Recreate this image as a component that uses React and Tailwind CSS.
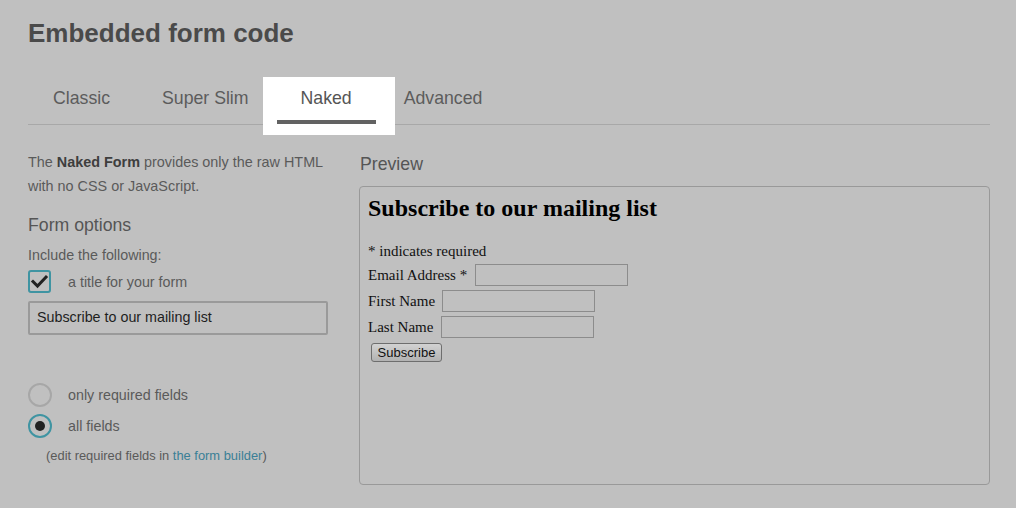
export default function App() {
  const tabs = ["Classic", "Super Slim", "Naked", "Advanced"];
  return (
    <div className="w-[1016px] h-[508px] bg-[#c0c0c0] pl-[28px] pr-[26px] overflow-hidden font-['Liberation_Sans',Arial,sans-serif]">
      <h1 className="pt-[18px] text-[26px] leading-[30px] font-bold text-[#4a4a4a]">Embedded form code</h1>

      <div className="relative mt-[39px] flex border-b border-[#a8a8a8]">
        <div className="absolute z-0 left-[235px] top-[-10px] w-[132px] h-[58px] bg-white" />
        {tabs.map((t, i) => {
          const active = t === "Naked";
          return (
            <div key={t} className={`relative z-10 flex flex-col ${i === 0 ? "-ml-[1px]" : ""}`}>
              <div className={`px-[26px] text-[17.7px] leading-[22px] ${active ? "text-[#555555]" : "text-[#5c5c5c]"}`}>{t}</div>
              <div className={`mt-[11px] h-[4px] ${active ? "mx-[2px] bg-[#626262]" : "bg-transparent"}`} />
            </div>
          );
        })}
      </div>

      <div className="flex gap-[31px]">
        {/* Left column */}
        <div className="w-[300px] shrink-0 text-[#5a5a5a]">
          <p className="mt-[25px] text-[14.4px] leading-[24px]">
            The <span className="font-bold text-[#3e3e3e]">Naked Form</span> provides only the raw HTML with no CSS or JavaScript.
          </p>
          <div className="mt-[15px] text-[17.7px] leading-[24px] text-[#555555]">Form options</div>
          <div className="mt-[8px] text-[14.3px] leading-[20px]">Include the following:</div>
          <div className="mt-[5px] flex items-center">
            <div className="w-[23px] h-[23px] rounded-[3px] border-2 border-[#3f94a2] flex items-center justify-center">
              <svg width="19" height="19" viewBox="0 0 19 19">
                <polyline points="3,9.5 7.5,14 16,5" fill="none" stroke="#222" strokeWidth="3" strokeLinecap="square" />
              </svg>
            </div>
            <span className="ml-[17px] text-[14.3px] leading-[20px]">a title for your form</span>
          </div>
          <div className="mt-[8px] h-[34px] w-[300px] border-2 border-[#9a9a9a] rounded-[2px] flex items-center pl-[7px] text-[14.3px] text-[#1e1e1e]">
            Subscribe to our mailing list
          </div>

          <div className="mt-[48px] flex items-center">
            <div className="w-[24px] h-[24px] rounded-full border-2 border-[#a7a7a7]" />
            <span className="ml-[16px] text-[14.3px] leading-[20px]">only required fields</span>
          </div>
          <div className="mt-[7px] flex items-center">
            <div className="w-[24px] h-[24px] rounded-full border-[2.5px] border-[#3f94a2] flex items-center justify-center">
              <div className="w-[10px] h-[10px] rounded-full bg-[#222222]" />
            </div>
            <span className="ml-[16px] text-[14.3px] leading-[20px]">all fields</span>
          </div>
          <div className="mt-[9px] ml-[18px] text-[12.9px] leading-[18px] text-[#5a5a5a]">
            (edit required fields in <span className="text-[#3a7f96]">the form builder</span>)
          </div>
        </div>

        {/* Right column */}
        <div className="w-[631px] shrink-0">
          <div className="mt-[27px] pl-[1px] text-[17.7px] leading-[24px] text-[#555555]">Preview</div>
          <div className="mt-[10px] h-[299px] border border-[#999999] rounded-[4px] pl-[8px] pt-[7px] font-['Liberation_Serif','Times_New_Roman',serif] text-[#111111]">
            <h2 className="text-[24px] leading-[28px] font-bold text-black">Subscribe to our mailing list</h2>
            <div className="mt-[19px] text-[15px] leading-[20px]">* indicates required</div>
            <div className="mt-[3px] flex items-center h-[22px] text-[15px]">
              <span>Email Address *</span>
              <div className="ml-[8px] w-[153px] h-[22px] border border-[#8c8c8c]" />
            </div>
            <div className="mt-[4px] flex items-center h-[22px] text-[15px]">
              <span>First Name</span>
              <div className="ml-[7px] w-[153px] h-[22px] border border-[#8c8c8c]" />
            </div>
            <div className="mt-[4px] flex items-center h-[22px] text-[15px]">
              <span>Last Name</span>
              <div className="ml-[8px] w-[153px] h-[22px] border border-[#8c8c8c]" />
            </div>
            <div className="mt-[5px] ml-[3px] w-[71px] h-[19px] rounded-[3px] border border-[#6e6e6e] bg-gradient-to-b from-[#d2d2d2] to-[#b2b2b2] flex items-center justify-center font-['Liberation_Sans',Arial,sans-serif] text-[13px] text-[#111111]">
              Subscribe
            </div>
          </div>
        </div>
      </div>
    </div>
  );
}
